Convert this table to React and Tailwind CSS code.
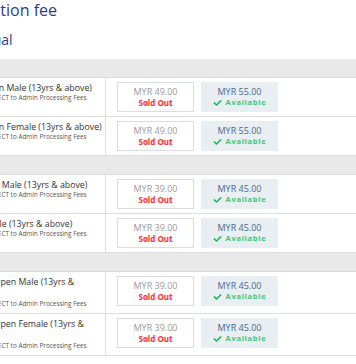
import { FaCheck } from "react-icons/fa";

const sections = [
  {
    rows: [
      { name: "Senior Open Male (13yrs & above)", early: "MYR 49.00", price: "MYR 55.00" },
      { name: "Senior Open Female (13yrs & above)", early: "MYR 49.00", price: "MYR 55.00" },
    ],
  },
  {
    rows: [
      { name: "Adult Open Male (13yrs & above)", early: "MYR 39.00", price: "MYR 45.00" },
      { name: "Adult Female (13yrs & above)", early: "MYR 39.00", price: "MYR 45.00" },
    ],
  },
  {
    rows: [
      { name: "Veterans' Open Male (13yrs & above)", early: "MYR 39.00", price: "MYR 45.00" },
      { name: "Veterans' Open Female (13yrs & above)", early: "MYR 39.00", price: "MYR 45.00" },
    ],
  },
];

function TicketRow({ row }) {
  return (
    <div className="grid grid-cols-[166px_1fr] border-b border-[#dddddd] bg-white">
      <div className="border-r border-[#dddddd] pl-[13px] pr-[2.5px] pt-[4px] pb-[5px]">
        <p className="text-[8.8px] leading-[12px] text-[#333333]">{row.name}</p>
        <p className="text-[6.4px] leading-[8px] text-[#555555]">
          Prices are SUBJECT to Admin Processing Fees
        </p>
      </div>
      <div className="flex items-start gap-[7px] pl-[11px] pt-[4px] pb-[4px]">
        <div className="flex h-[30px] w-[77px] flex-col items-center justify-center border border-[#dcdcdc] bg-white">
          <span className="text-[9px] leading-[11px] text-[#9a9a9a]">{row.early}</span>
          <span className="text-[8px] font-bold leading-[11px] text-[#ff2d2d]">Sold Out</span>
        </div>
        <div className="flex h-[30px] w-[77px] flex-col items-center justify-center bg-[#e8eef1]">
          <span className="text-[9px] leading-[11px] text-[#4a6a8c]">{row.price}</span>
          <span className="flex items-center gap-[4px] text-[7.5px] font-bold leading-[11px] tracking-[0.7px] text-[#3cc97a]">
            <FaCheck className="h-[8px] w-[9px] text-[#1fb257]" />
            Available
          </span>
        </div>
      </div>
    </div>
  );
}

export default function App() {
  return (
    <div className="w-[356px] min-h-[364px] overflow-hidden bg-white font-['Open_Sans',sans-serif]">
      <div className="-ml-[60px] w-[416px]">
        <h2 className="text-[16px] leading-[20px] text-[#2d3c8e]">Registration fee</h2>
        <h3 className="mt-[10px] mb-[9px] pl-[9px] text-[14px] leading-[20px] text-[#2d3c8e]">Individual</h3>
        {sections.map((section, i) => (
          <div key={i}>
            <div className="h-[19px] border-b border-[#dddddd] bg-[#e9e9e9]"></div>
            {section.rows.map((row, j) => (
              <TicketRow key={j} row={row} />
            ))}
          </div>
        ))}
      </div>
    </div>
  );
}
